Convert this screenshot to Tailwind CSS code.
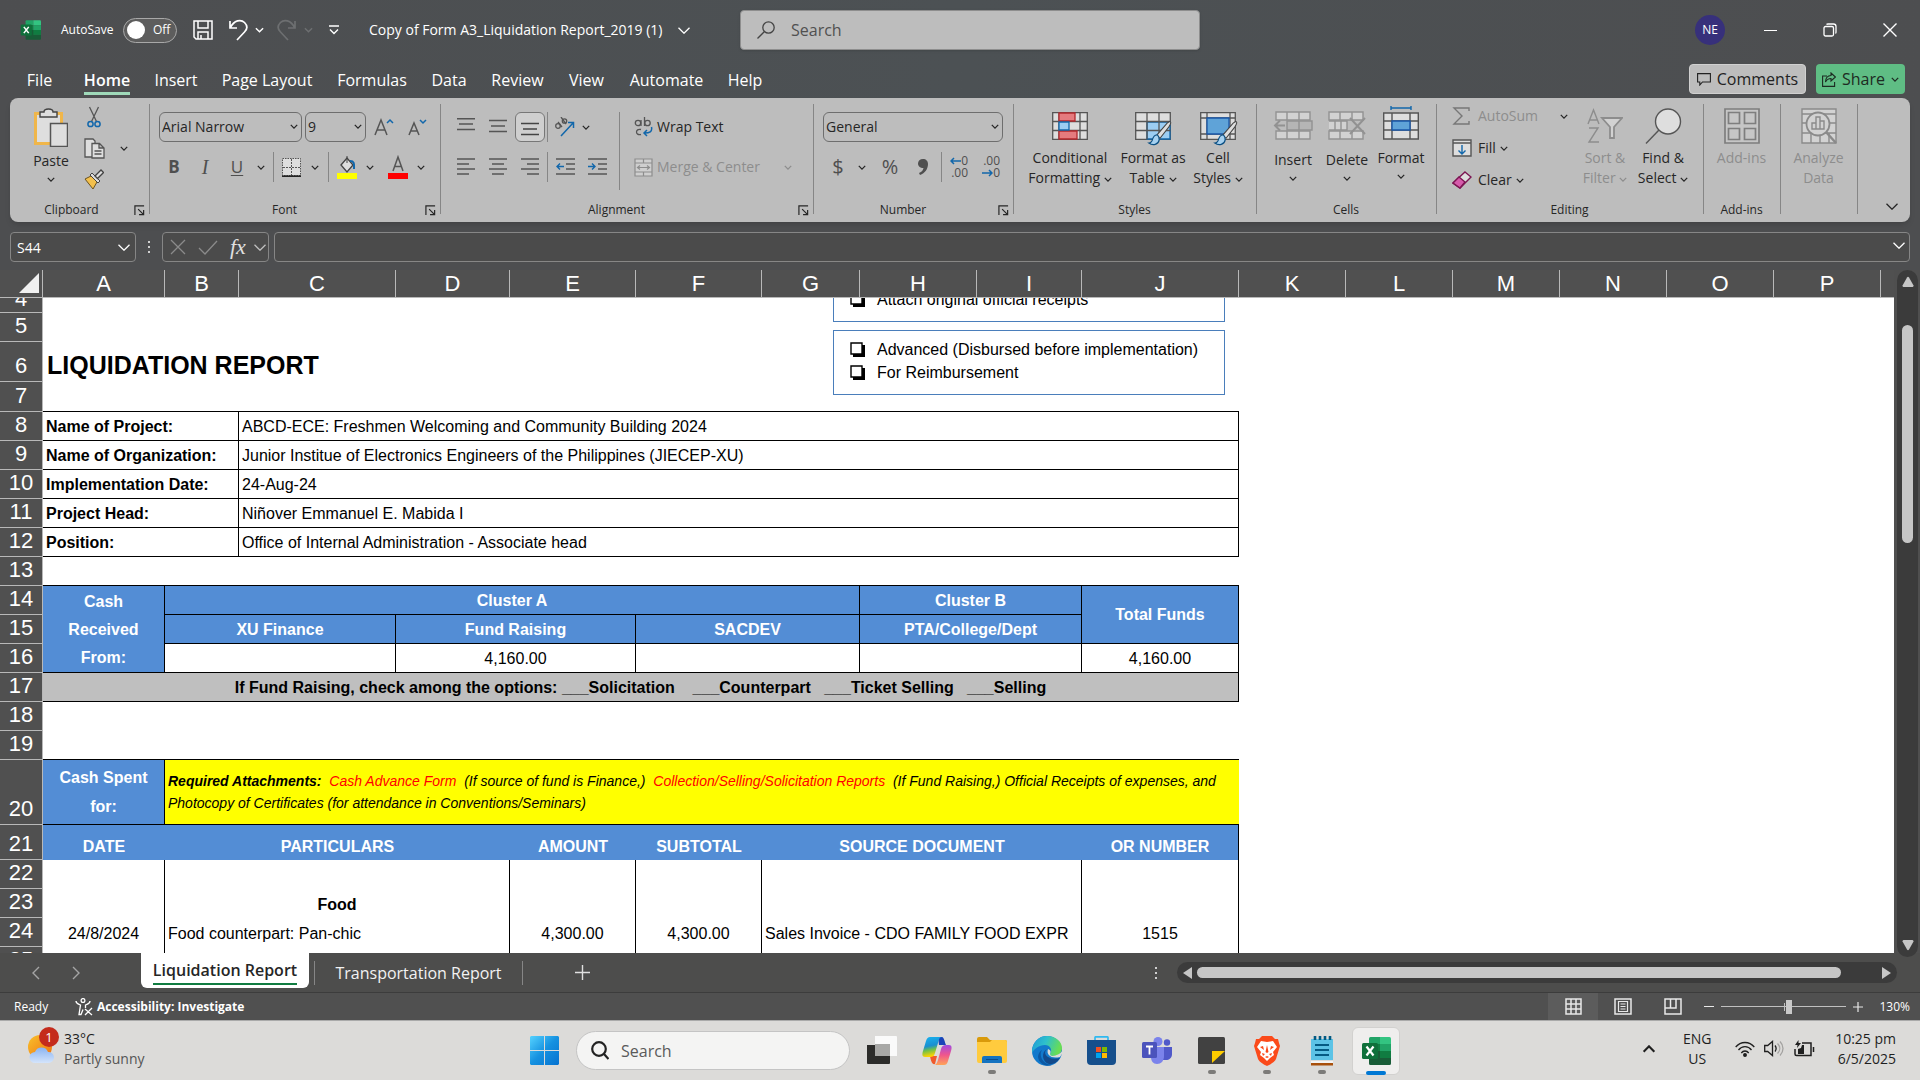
<!DOCTYPE html>
<html lang="en">
  <head>
    <meta charset="UTF-8" />
    <title>Copy of Form A3_Liquidation Report_2019 (1) - Excel</title>
    <meta name="viewport" content="width=device-width, initial-scale=1.0" />
    <script src="https://cdn.jsdelivr.net/npm/@tailwindcss/browser@4"></script>
  </head>
  <body class="h-screen flex flex-col overflow-hidden bg-[#4d4e50] text-white font-['Open_Sans',sans-serif] text-sm">
    <!-- Shared symbols -->
    <svg class="hidden">
      <symbol id="chev" viewBox="0 0 10 6"><path d="M1 1l4 4 4-4" fill="none" stroke="currentColor" stroke-width="1.6" /></symbol>
      <symbol id="chev-lg" viewBox="0 0 12 7"><path d="M.5.700l5.500 5.500 5.500-5.500" fill="none" stroke="currentColor" stroke-width="1.300" /></symbol>
      <symbol id="launcher" viewBox="0 0 12 12"><path d="M1 11V1h10M4.500 4.500L10 10M10.500 5.500v5h-5" fill="none" stroke="currentColor" stroke-width="1.300" /></symbol>
      <symbol id="xl" viewBox="0 0 30 28">
        <path d="M8 1.500A1.500 1.500 0 0 1 9.500 0H19v7H8z" fill="#21a366" />
        <path d="M19 0h9.500A1.500 1.500 0 0 1 30 1.500V7H19z" fill="#33c481" />
        <path d="M8 7h11v7H8z" fill="#107c41" /><path d="M19 7h11v7H19z" fill="#21a366" />
        <path d="M8 14h22v7H8z" fill="#107c41" /><path d="M8 14h11v7H8z" fill="#185c37" />
        <path d="M8 21h22v5.500a1.500 1.500 0 0 1-1.500 1.500h-19A1.500 1.500 0 0 1 8 26.500z" fill="#185c37" />
        <rect x="1" y="6" width="16" height="16" rx="1.500" fill="#0f703b" />
        <path d="M5.500 9.500l7 9M12.500 9.500l-7 9" stroke="#fff" stroke-width="2.200" />
      </symbol>
      <symbol id="brush" viewBox="0 0 30 34">
        <path d="M27 2c3 0 1 4-1 7L15 23l-4-4L24 4z" fill="#dedede" stroke="#444" stroke-width="1.300" />
        <path d="M12 19c-5-1-6 4-7 7-1 2-2 3-4 3 5 4 12 2 13-4 0-3 0-4-2-6z" fill="#a6d1f0" stroke="#0b4f83" stroke-width="1.500" />
      </symbol>
    </svg>

    <!-- Title bar -->
    <header class="h-[60px] shrink-0 flex items-center bg-linear-to-r from-[#4d4e50] via-[#4c5154] to-[#4d4e50]">
      <div class="w-[740px] shrink-0 flex items-center pl-5 text-xs">
        <svg class="w-[21px] h-5"><use href="#xl" /></svg>
        <span class="ml-5 w-[62px]">AutoSave</span>
        <button class="w-[54px] h-[25px] rounded-full border border-[#a8a8a8] bg-[#5d5d5d] flex items-center px-[3px] gap-2">
          <span class="size-[18px] rounded-full bg-white"></span>Off
        </button>
        <button class="ml-4" aria-label="Save">
          <svg class="size-5" viewBox="0 0 20 20" fill="none" stroke="#fff" stroke-width="1.500"><path d="M1 1h18v18H3l-2-2zM5 1v7h10V1M5 19v-7h10v7M8 15v4" /></svg>
        </button>
        <button class="ml-4" aria-label="Undo">
          <svg class="w-5 h-[22px]" viewBox="0 0 20 22" fill="none" stroke="#fff" stroke-width="1.700"><path d="M1 2v7h7M1.500 8.500C5 1 12 0 15.500 3.500c3.500 3.500 2.500 7 0 9.500L8 21" /></svg>
        </button>
        <svg class="ml-1.5 w-[9px] h-1.5"><use href="#chev" /></svg>
        <button class="ml-3 text-[#6d6f71]" aria-label="Redo">
          <svg class="w-5 h-[22px]" viewBox="0 0 20 22" fill="none" stroke="currentColor" stroke-width="1.700"><path d="M19 2v7h-7M18.500 8.500C15 1 8 0 4.500 3.500 1 7 2 10.500 4.500 13l7.500 8" /></svg>
        </button>
        <svg class="ml-2 w-[9px] h-1.5 text-[#6d6f71]"><use href="#chev" /></svg>
        <svg class="ml-4 w-[10px] h-[10px]" viewBox="0 0 10 10" fill="none" stroke="#fff" stroke-width="1.400"><path d="M0 1h10M1 4.500l4 4 4-4" /></svg>
        <h1 class="ml-[30px] w-[303px] text-sm">Copy of Form A3_Liquidation Report_2019 (1)</h1>
        <svg class="ml-1.5 w-3 h-[7px]"><use href="#chev-lg" /></svg>
      </div>
      <label class="w-[460px] h-10 flex items-center rounded bg-[#bdbdbd] border border-[#8e8e8e] shadow pl-4">
        <svg class="w-[18px] h-[18px]" viewBox="0 0 18 18" fill="none" stroke="#444" stroke-width="1.300"><circle cx="11.500" cy="6.500" r="5.700" /><path d="M7.500 10.500L.5 17.500" /></svg>
        <input type="text" placeholder="Search" class="ml-4 flex-1 text-base text-[#444] placeholder:text-[#505050] outline-none" />
      </label>
      <div class="flex-1 flex items-center justify-end">
        <span class="size-[30px] rounded-full bg-[#37307b] flex items-center justify-center text-xs mr-[15px]">NE</span>
        <button class="w-[60px] flex justify-center" aria-label="Minimize"><span class="w-[13px] h-px bg-white"></span></button>
        <button class="w-[60px] flex justify-center" aria-label="Restore"><svg class="size-3.5" viewBox="0 0 14 14" fill="none" stroke="#fff" stroke-width="1.300"><rect x="1" y="3.500" width="9.500" height="9.500" rx="1.500" /><path d="M3.500 1.500C4 1 4.500 1 5 1h5.500c1.500 0 2.500 1 2.500 2.500v5.500c0 .5 0 1-.5 1.500" /></svg></button>
        <button class="w-[60px] flex justify-center" aria-label="Close"><svg class="size-3.5" viewBox="0 0 14 14" stroke="#fff" stroke-width="1.400"><path d="M.5.5l13 13M13.500.5l-13 13" /></svg></button>
      </div>
    </header>

    <!-- Ribbon tabs -->
    <nav class="h-[38px] shrink-0 flex items-start pl-2.5 pr-[15px] text-base bg-linear-to-r from-[#4d4e50] via-[#4c5154] to-[#4d4e50]">
      <button class="w-[59px] h-10 leading-10">File</button>
      <button class="w-[76px] h-[35px] leading-10 font-semibold flex justify-center"><span class="h-[35px] border-b-[3px] border-[#9fd9b9]">Home</span></button>
      <button class="w-[62px] h-10 leading-10">Insert</button>
      <button class="w-[120px] h-10 leading-10">Page Layout</button>
      <button class="w-[90px] h-10 leading-10">Formulas</button>
      <button class="w-[64px] h-10 leading-10">Data</button>
      <button class="w-[73px] h-10 leading-10">Review</button>
      <button class="w-[65px] h-10 leading-10">View</button>
      <button class="w-[95px] h-10 leading-10">Automate</button>
      <button class="w-[62px] h-10 leading-10">Help</button>
      <button class="ml-auto mt-1 w-[117px] h-[30px] rounded bg-[#bdbdbd] border border-[#d0d0d0] text-[#222] flex items-center justify-center gap-1.5">
        <svg class="w-3.5 h-[13px]" viewBox="0 0 14 13" fill="none" stroke="#222" stroke-width="1.100"><path d="M.6.6h12.800v8.400H5.500L2.800 12V9H.6z" /></svg>Comments
      </button>
      <button class="ml-2.5 mt-1 w-[89px] h-[30px] rounded bg-[#5fbd84] text-[#1d2b22] flex items-center justify-center gap-1.5">
        <svg class="w-3.5 h-[15px]" viewBox="0 0 14 15" fill="none" stroke="currentColor" stroke-width="1.100"><path d="M5 4H.6v10.400h12V10M9 1l4.400 4L9 9V6.500C6 6.500 4.500 8 3.500 10c0-4 2-6.500 5.500-6.500z" /></svg>Share
        <svg class="w-2 h-[5px]"><use href="#chev" /></svg>
      </button>
    </nav>

    <!-- Ribbon -->
    <section class="mx-2.5 h-[124px] shrink-0 rounded-lg bg-[#bdbdbd] text-[#262626] flex shadow-md text-sm">
      <!-- Clipboard -->
      <div class="w-[139px] flex flex-col relative">
        <div class="h-[100px] flex pl-4">
          <button class="w-[50px] flex flex-col items-center pt-2.5">
            <svg class="w-[34px] h-[39px]" viewBox="0 0 34 39" fill="none"><path d="M1.500 5.500h26v30h-26z" fill="#dedede" stroke="#f0b64a" stroke-width="3" /><path d="M6 9V4h4c0-4 9-4 9 0h4v5z" fill="#dedede" stroke="#444" stroke-width="1.400" /><path d="M16.500 15.500h17v23h-17z" fill="#dedede" stroke="#555" stroke-width="1.500" /></svg>
            <span class="leading-5 mt-1">Paste</span>
            <svg class="mt-1.5 w-2 h-[5px]"><use href="#chev" /></svg>
          </button>
          <div class="w-9 flex flex-col items-center pt-2 gap-2.5">
            <button aria-label="Cut"><svg class="block w-3.5 h-[22px]" viewBox="0 0 14 22" fill="none" stroke="#555" stroke-width="1.300"><path d="M2.500 1l7 14.500M11.500 1l-7 14.500" /><g stroke="#1267ab" stroke-width="1.500"><circle cx="3.500" cy="18" r="2.600" /><circle cx="10.500" cy="18" r="2.600" /></g></svg></button>
            <button aria-label="Copy"><svg class="block w-[21px] h-[21px]" viewBox="0 0 21 21" fill="#dedede" stroke="#555" stroke-width="1.300"><path d="M8 19H1V1h8l2 2v3" /><path d="M8 5.500h7.500L20 10v10H8zM15 5.500V10h5M10.500 13h7M10.500 16h7" /></svg></button>
            <button aria-label="Format Painter"><svg class="block w-5 h-5" viewBox="0 0 20 20"><path d="M1 10l6-3 6 6-4 7z" fill="#f3c04d" stroke="#6b5320" /><path d="M6 6l2-2 8 8-2 2z" fill="#dedede" stroke="#444" /><path d="M11 7l6-6 2.500 2.500-6 6z" fill="#dedede" stroke="#444" stroke-width="1.300" /></svg></button>
          </div>
          <button class="ml-2 w-3.5" aria-label="Copy options"><svg class="w-2 h-[5px]"><use href="#chev" /></svg></button>
        </div>
        <div class="h-6 flex items-center justify-center text-xs pr-4">Clipboard</div>
        <svg class="absolute right-1 bottom-1.5 w-[11px] h-[11px]"><use href="#launcher" /></svg>
      </div>
      <!-- Font -->
      <div class="w-[291px] flex flex-col relative">
        <span class="absolute left-0 top-1.5 bottom-2 w-px bg-[#868686]"></span>
        <div class="h-[100px] pt-3.5 pl-2.5 flex flex-col gap-2.5">
          <div class="flex items-center h-[30px]">
            <div class="relative w-[143px] h-[30px]"><select aria-label="Font name" class="appearance-none w-full h-full border border-[#6e6e6e] rounded-md px-0.5"><option>Arial Narrow</option></select><svg class="absolute right-1 top-3 w-2 h-[5px]"><use href="#chev" /></svg></div>
            <div class="relative ml-[3px] w-[61px] h-[30px]"><select aria-label="Font size" class="appearance-none w-full h-full border border-[#6e6e6e] rounded-md px-0.5"><option>9</option></select><svg class="absolute right-1 top-3 w-2 h-[5px]"><use href="#chev" /></svg></div>
            <button class="ml-2 w-5" aria-label="Increase Font Size"><svg class="w-5 h-[18px]" viewBox="0 0 20 18" fill="none" stroke="#555" stroke-width="1.500"><path d="M1 17L7 2l6 15M3 12h8" /><path d="M13 5l3-3 3 3" stroke="#1267ab" /></svg></button>
            <button class="ml-3.5 w-5" aria-label="Decrease Font Size"><svg class="w-5 h-[18px]" viewBox="0 0 20 18" fill="none" stroke="#555" stroke-width="1.500"><path d="M1 17L6 5l5 12M3 13h6" /><path d="M12 2l3 3 3-3" stroke="#1267ab" /></svg></button>
          </div>
          <div class="flex items-center h-[30px] text-[17px] text-[#4f4f4f]">
            <button class="w-[30px] font-bold">B</button>
            <button class="w-8 italic font-['Liberation_Serif',serif] text-xl">I</button>
            <button class="w-8 underline underline-offset-2">U</button>
            <svg class="ml-1 mr-2 w-2 h-[5px] text-[#262626]"><use href="#chev" /></svg>
            <span class="w-px h-[30px] bg-[#868686]"></span>
            <button class="ml-2 w-[19px]" aria-label="Borders"><svg class="w-[19px] h-[19px]" viewBox="0 0 19 19" fill="none" stroke="#555"><path d="M.5.5h18v17H.5z" fill="#dedede" stroke-dasharray="1.500 1" /><path d="M9.500 1v17M1 9.500h17" stroke-dasharray="2 1" /><path d="M0 18.200h19" stroke="#222" stroke-width="1.600" /></svg></button>
            <svg class="ml-2.5 w-2 h-[5px] text-[#262626]"><use href="#chev" /></svg>
            <span class="ml-[9px] w-px h-[30px] bg-[#868686]"></span>
            <button class="ml-2 w-5" aria-label="Fill Color"><svg class="w-5 h-6" viewBox="0 0 20 24"><path d="M4 10l6-7 6 7-6 7z" fill="#dedede" stroke="#444" stroke-width="1.300" /><path d="M10 8V1" stroke="#444" /><path d="M13 6c5 0 4 4 4 8" stroke="#1267ab" stroke-width="2" fill="none" /><path d="M0 18h20v6H0z" fill="#ff0" /></svg></button>
            <svg class="ml-[9px] w-2 h-[5px] text-[#262626]"><use href="#chev" /></svg>
            <button class="ml-3.5 w-5" aria-label="Font Color"><svg class="w-5 h-6" viewBox="0 0 20 24"><path d="M5 16l5-14 5 14M6.500 11.500h7" fill="none" stroke="#555" stroke-width="1.500" /><path d="M0 18h20v6H0z" fill="#f00" /></svg></button>
            <svg class="ml-[9px] w-2 h-[5px] text-[#262626]"><use href="#chev" /></svg>
          </div>
        </div>
        <div class="h-6 flex items-center justify-center text-xs pr-5">Font</div>
        <svg class="absolute right-1 bottom-1.5 w-[11px] h-[11px]"><use href="#launcher" /></svg>
      </div>
      <!-- Alignment -->
      <div class="w-[373px] flex flex-col relative">
        <span class="absolute left-0 top-1.5 bottom-2 w-px bg-[#868686]"></span>
        <div class="h-[100px] pt-3.5 pl-2.5 flex">
          <div class="w-[169px] flex flex-col gap-2.5">
            <div class="flex items-center h-[30px]">
              <button class="w-8 flex justify-center" aria-label="Top Align"><svg class="w-[18px] h-[18px]" viewBox="0 0 18 18" stroke="#555" stroke-width="1.400"><path d="M0 .7h18M2 6h14M0 11.500h18" /></svg></button>
              <button class="w-8 flex justify-center" aria-label="Middle Align"><svg class="w-[18px] h-[18px]" viewBox="0 0 18 18" stroke="#555" stroke-width="1.400"><path d="M0 2.500h18M2 8h14M0 13.500h18" /></svg></button>
              <button class="w-[30px] h-[30px] ml-px rounded-md bg-[#cfcfcf] border border-[#777] flex items-center justify-center" aria-label="Bottom Align"><svg class="w-[18px] h-[18px]" viewBox="0 0 18 18" stroke="#444" stroke-width="1.400"><path d="M0 5.500h18M2 11h14M0 16.500h18" /></svg></button>
              <span class="ml-0.5 w-px h-[30px] bg-[#868686]"></span>
              <button class="ml-1.5 w-5" aria-label="Orientation"><svg class="w-[21px] h-[20px]" viewBox="0 0 21 20" fill="none" stroke="#555" stroke-width="1.300"><circle cx="4" cy="9" r="2.300" /><path d="M4 5l4 5M7 0l5 7" /><circle cx="10.500" cy="4" r="2.200" /><path d="M7 19L19 6M14 5.500h5.500V11" stroke="#1267ab" stroke-width="1.500" /></svg></button>
              <svg class="ml-2 w-2 h-[5px]"><use href="#chev" /></svg>
            </div>
            <div class="flex items-center h-[30px]">
              <button class="w-8 flex justify-center" aria-label="Align Left"><svg class="w-[18px] h-[18px]" viewBox="0 0 18 18" stroke="#555" stroke-width="1.400"><path d="M0 1h18M0 6h12M0 11h18M0 16h12" /></svg></button>
              <button class="w-8 flex justify-center" aria-label="Center"><svg class="w-[18px] h-[18px]" viewBox="0 0 18 18" stroke="#555" stroke-width="1.400"><path d="M0 1h18M3 6h12M0 11h18M3 16h12" /></svg></button>
              <button class="w-8 flex justify-center" aria-label="Align Right"><svg class="w-[18px] h-[18px]" viewBox="0 0 18 18" stroke="#555" stroke-width="1.400"><path d="M0 1h18M6 6h12M0 11h18M6 16h12" /></svg></button>
              <span class="ml-px w-px h-[30px] bg-[#868686]"></span>
              <button class="ml-2 w-[19px]" aria-label="Decrease Indent"><svg class="w-[19px] h-[18px]" viewBox="0 0 19 18" fill="none" stroke="#555" stroke-width="1.400"><path d="M0 1h19M10 6h9M10 11h9M0 16h19" /><path d="M8 8.500H1M4 5.500l-3 3 3 3" stroke="#1267ab" /></svg></button>
              <button class="ml-[13px] w-[19px]" aria-label="Increase Indent"><svg class="w-[19px] h-[18px]" viewBox="0 0 19 18" fill="none" stroke="#555" stroke-width="1.400"><path d="M0 1h19M10 6h9M10 11h9M0 16h19" /><path d="M0 8.500h7M4 5.500l3 3-3 3" stroke="#1267ab" /></svg></button>
            </div>
          </div>
          <span class="w-px h-[78px] bg-[#868686]"></span>
          <div class="pl-3.5 flex flex-col gap-2.5">
            <button class="flex items-center h-[30px] gap-1">
              <svg class="w-[19px] h-[20px]" viewBox="0 0 19 20" fill="none" stroke="#555" stroke-width="1.300"><circle cx="4" cy="6" r="2.700" /><path d="M7 3v6M10.500 0v9" /><circle cx="13.500" cy="6" r="2.700" /><path d="M7 12.500c-6-1.500-6 6.500 0 5" /><path d="M17.500 10c1 5-2 6-7 6M13 13l-3 3 3 3" stroke="#1267ab" stroke-width="1.500" /></svg>Wrap Text
            </button>
            <button class="flex items-center h-[30px] gap-1 text-[#8d8d8d]">
              <svg class="w-[19px] h-[19px]" viewBox="0 0 19 19" fill="#cfcfcf" stroke="#8d8d8d" stroke-width="1.200"><path d="M1 1h17v17H1zM1 5h17M1 14h17M9.500 1v4M9.500 14v4" /><path d="M3 9.500h13M6 7.500l-2.500 2 2.500 2M13 7.500l2.500 2-2.500 2" /></svg>Merge &amp; Center
              <svg class="ml-5 w-2 h-[5px]"><use href="#chev" /></svg>
            </button>
          </div>
        </div>
        <div class="h-6 flex items-center justify-center text-xs pr-5">Alignment</div>
        <svg class="absolute right-1 bottom-1.5 w-[11px] h-[11px]"><use href="#launcher" /></svg>
      </div>
      <!-- Number -->
      <div class="w-[200px] flex flex-col relative">
        <span class="absolute left-0 top-1.5 bottom-2 w-px bg-[#868686]"></span>
        <div class="h-[100px] pt-3.5 px-2.5 flex flex-col gap-2.5">
          <div class="relative h-[30px]"><select aria-label="Number format" class="appearance-none w-full h-full border border-[#6e6e6e] rounded-md px-0.5"><option>General</option></select><svg class="absolute right-1 top-3 w-2 h-[5px]"><use href="#chev" /></svg></div>
          <div class="flex items-center h-[30px] text-[#4f4f4f] text-xl">
            <button class="w-[30px]">$</button>
            <svg class="ml-[5px] mr-[3px] w-2 h-[5px] text-[#262626]"><use href="#chev" /></svg>
            <button class="w-[42px]">%</button>
            <button class="w-6 flex justify-center" aria-label="Comma Style"><svg class="w-2.5 h-4" viewBox="0 0 10 16"><path d="M5 0c3 0 5 2 5 5 0 5-3 9-8 11l-1-2c3-1 4-3 4.500-5C2 9 0 7 0 4.500 0 2 2 0 5 0z" fill="#4f4f4f" /></svg></button>
            <span class="ml-1.5 w-px h-[30px] bg-[#868686]"></span>
            <button class="ml-1.5 w-5 text-xs leading-3 flex flex-col items-end" aria-label="Increase Decimal"><span class="flex items-center h-3"><svg class="w-[11px] h-2" viewBox="0 0 11 8" fill="none" stroke="#1267ab" stroke-width="1.500"><path d="M11 4H1M4 1L1 4l3 3" /></svg>0</span><span class="h-3">.00</span></button>
            <button class="ml-3 w-5 text-xs leading-3 flex flex-col items-end" aria-label="Decrease Decimal"><span class="h-3">.00</span><span class="flex items-center h-3"><svg class="w-[11px] h-2" viewBox="0 0 11 8" fill="none" stroke="#1267ab" stroke-width="1.500"><path d="M0 4h10M7 1l3 3-3 3" /></svg>0</span></button>
          </div>
        </div>
        <div class="h-6 flex items-center justify-center text-xs pr-5">Number</div>
        <svg class="absolute right-1 bottom-1.5 w-[11px] h-[11px]"><use href="#launcher" /></svg>
      </div>
      <!-- Styles -->
      <div class="w-[243px] flex flex-col relative">
        <span class="absolute left-0 top-1.5 bottom-2 w-px bg-[#868686]"></span>
        <div class="h-[100px] pt-3.5 pl-3 flex leading-5">
          <button class="w-[90px] flex flex-col items-center gap-2">
            <svg class="w-9 h-7" viewBox="0 0 36 28" fill="#dedede" stroke="#555" stroke-width="1.300"><path d="M.7.7h34.600v26.600H.7zM.7 9.500h34.600M.7 18.500h34.600M7 .7v26.600M28 .7v26.600" /><path d="M7 1h16v8H7zM7 19h18v8H7z" fill="#e57b7e" stroke="#b3282d" /><path d="M7 10h10v8H7z" fill="#9ccdf2" stroke="#1267ab" /></svg>
            <span>Conditional<br />Formatting <svg class="inline w-2 h-[5px] align-middle"><use href="#chev" /></svg></span>
          </button>
          <button class="w-[76px] flex flex-col items-center gap-2 relative">
            <svg class="w-9 h-7" viewBox="0 0 36 28" fill="#dedede" stroke="#555" stroke-width="1.300"><path d="M.7.7h34.600v26.600H.7z" /><path d="M12 10h23v17H12z" fill="#9ccdf2" stroke="#1267ab" /><path d="M.7 9.500h34.600M.7 18.500h34.600M12 .7v26.600M24 .7v26.600" /></svg>
            <svg class="absolute left-[30px] top-2 w-[30px] h-[27px]"><use href="#brush" /></svg>
            <span class="whitespace-nowrap">Format as<br />Table <svg class="inline w-2 h-[5px] align-middle"><use href="#chev" /></svg></span>
          </button>
          <button class="w-[54px] flex flex-col items-center gap-2 relative">
            <svg class="w-9 h-7" viewBox="0 0 36 28" fill="#dedede" stroke="#555" stroke-width="1.300"><path d="M.7.7h34.600v26.600H.7zM.7 6h34.600M.7 22h34.600M7 .7v26.600M30 .7v26.600" /><path d="M7 6h22v16H7z" fill="#5fa3d8" stroke="#1a57a8" /></svg>
            <svg class="absolute left-5 top-2 w-[30px] h-[27px]"><use href="#brush" /></svg>
            <span>Cell<br />Styles <svg class="inline w-2 h-[5px] align-middle"><use href="#chev" /></svg></span>
          </button>
        </div>
        <div class="h-6 flex items-center justify-center text-xs">Styles</div>
      </div>
      <!-- Cells -->
      <div class="w-[180px] flex flex-col relative">
        <span class="absolute left-0 top-1.5 bottom-2 w-px bg-[#868686]"></span>
        <div class="h-[100px] pt-2 pl-2.5 flex leading-5">
          <button class="w-[54px] flex flex-col items-center">
            <svg class="mt-1 w-10 h-[30px]" viewBox="0 0 40 30" fill="#d2d2d2" stroke="#929292" stroke-width="1.400"><path d="M3 2h34v8H3zM14 2v8M26 2v8M3 21h34v8H3zM14 21v8M26 21v8" /><path d="M14 11h25v9H14zM26 11v9" fill="#b5b5b5" /><path d="M12 15.500H2M7 10.500l-5 5 5 5" fill="none" stroke-width="2" /></svg>
            <span class="mt-2.5">Insert</span><svg class="mt-1.5 w-2 h-[5px]"><use href="#chev" /></svg>
          </button>
          <button class="w-[54px] flex flex-col items-center">
            <svg class="mt-1 w-[38px] h-[30px]" viewBox="0 0 38 30" fill="#d2d2d2" stroke="#929292" stroke-width="1.400"><path d="M1 2h34v8H1zM12 2v8M24 2v8M1 21h34v8H1zM12 21v8M24 21v8" /><path d="M1 11h18v9H1M7 11v9M13 11v9" /><path d="M22 8l15 16M37 8L22 24" fill="none" stroke-width="2" /></svg>
            <span class="mt-2.5">Delete</span><svg class="mt-1.5 w-2 h-[5px]"><use href="#chev" /></svg>
          </button>
          <button class="w-[54px] flex flex-col items-center">
            <svg class="w-9 h-[34px]" viewBox="0 0 36 34" fill="#dedede" stroke="#555" stroke-width="1.400"><path d="M8 2h20M8 0v4M28 0v4" stroke="#1267ab" /><path d="M.7 7h34.600v26H.7zM.7 15h34.600M.7 24h34.600M9 7v26M27 7v26" /><path d="M9 15h18v9H9z" fill="#5fa3d8" stroke="#1a57a8" /></svg>
            <span class="mt-2">Format</span><svg class="mt-1.5 w-2 h-[5px]"><use href="#chev" /></svg>
          </button>
        </div>
        <div class="h-6 flex items-center justify-center text-xs">Cells</div>
      </div>
      <!-- Editing -->
      <div class="w-[267px] flex flex-col relative">
        <span class="absolute left-0 top-1.5 bottom-2 w-px bg-[#868686]"></span>
        <div class="h-[100px] flex leading-5">
          <div class="w-[140px] pl-4 pt-0.5 flex flex-col">
            <button class="h-8 flex items-center text-[#8d8d8d]"><svg class="w-5 h-[18px] mr-1.5" viewBox="0 0 20 18" fill="none" stroke="#777" stroke-width="1.400"><path d="M17 4V1H2l8 8-8 8h15v-3" /></svg>AutoSum<svg class="ml-auto mr-2 w-2 h-[5px] text-[#262626]"><use href="#chev" /></svg></button>
            <button class="h-8 flex items-center"><svg class="w-5 h-[18px] mr-1.5" viewBox="0 0 20 18" fill="#dedede" stroke="#555" stroke-width="1.400"><path d="M1 1h18v16H1zM1 4h18" /><path d="M10 6v9M6.500 11.500L10 15l3.500-3.500" fill="none" stroke="#1267ab" /></svg>Fill<svg class="ml-1 w-2 h-[5px]"><use href="#chev" /></svg></button>
            <button class="h-8 flex items-center"><svg class="w-5 h-[18px] mr-1.5" viewBox="0 0 20 18" fill="#dedede" stroke="#7c1552" stroke-width="1.400"><path d="M13 1l6 5-11 11-7-5z" /><path d="M7 6l6 5-5 6-7-5z" fill="#d65bab" /></svg>Clear<svg class="ml-1 w-2 h-[5px]"><use href="#chev" /></svg></button>
          </div>
          <button class="w-[58px] pt-2.5 flex flex-col items-center text-[#8d8d8d]">
            <svg class="w-9 h-[36px]" viewBox="0 0 36 36" fill="none" stroke="#8d8d8d" stroke-width="1.400"><path d="M1 16L6.500 2 12 16M3 12h7M2 20h9L2 34h10" /><path d="M15 10h20l-8 9v11h-4V19z" fill="#d2d2d2" stroke-width="1.800" /></svg>
            <span class="mt-1 whitespace-nowrap">Sort &amp;<br />Filter <svg class="inline w-2 h-[5px] align-middle"><use href="#chev" /></svg></span>
          </button>
          <button class="w-[58px] pt-2.5 flex flex-col items-center">
            <svg class="w-[37px] h-[36px]" viewBox="0 0 37 36" fill="#dedede" stroke="#555" stroke-width="1.400"><circle cx="23" cy="13.500" r="12.500" /><path d="M14 22L1 35.500" /></svg>
            <span class="mt-1 whitespace-nowrap">Find &amp;<br />Select <svg class="inline w-2 h-[5px] align-middle"><use href="#chev" /></svg></span>
          </button>
        </div>
        <div class="h-6 flex items-center justify-center text-xs">Editing</div>
      </div>
      <!-- Add-ins -->
      <div class="w-[77px] flex flex-col relative">
        <span class="absolute left-0 top-1.5 bottom-2 w-px bg-[#868686]"></span>
        <button class="h-[100px] pt-2.5 flex flex-col items-center leading-5 text-[#8d8d8d]">
          <svg class="w-9 h-9" viewBox="0 0 36 36" fill="#c6c6c6" stroke="#7e7e7e" stroke-width="1.700"><path d="M1 1h34v34H1z" /><path d="M4.500 4.500h11v11h-11zM20.500 4.500h11v11h-11zM4.500 20.500h11v11h-11zM20.500 20.500h11v11h-11z" /></svg>
          <span class="mt-1">Add-ins</span>
        </button>
        <div class="h-6 flex items-center justify-center text-xs">Add-ins</div>
      </div>
      <div class="w-[77px] flex flex-col relative">
        <span class="absolute left-0 top-1.5 bottom-2 w-px bg-[#868686]"></span>
        <button class="h-[100px] pt-2.5 flex flex-col items-center leading-5 text-[#8d8d8d]">
          <svg class="w-9 h-9" viewBox="0 0 36 36" fill="#d2d2d2" stroke="#8a8a8a" stroke-width="1.400"><path d="M1 1h34v34H1zM1 6h34M1 15h34M1 25h34M10 25v10M19 25v10M28 25v10" /><circle cx="17" cy="16" r="11.500" stroke-width="1.800" /><path d="M25 24l10 11" stroke-width="2.500" /><path d="M11 15h4v6h-4zM15 9h4v12h-4zM19 13h4v8h-4z" /></svg>
          <span class="mt-1">Analyze<br />Data</span>
        </button>
      </div>
      <div class="flex-1 flex items-end justify-end relative pr-3 pb-3">
        <span class="absolute left-0 top-1.5 bottom-2 w-px bg-[#868686]"></span>
        <button aria-label="Ribbon Display Options"><svg class="w-3 h-[7px]"><use href="#chev-lg" /></svg></button>
      </div>
    </section>

    <!-- Formula bar -->
    <section class="h-12 shrink-0 flex pt-2.5 px-2.5">
      <div class="relative w-[126px] h-[30px]">
        <input type="text" aria-label="Name Box" value="S44" class="w-full h-full bg-[#4b4b4b] border border-[#868686] rounded px-1.5 text-sm" />
        <svg class="absolute right-1.5 top-3 w-3 h-[7px]"><use href="#chev-lg" /></svg>
      </div>
      <svg class="mx-3 w-0.5 h-[30px]" viewBox="0 0 2 30" fill="#d0d0d0"><path d="M0 9h2v2H0zM0 14h2v2H0zM0 19h2v2H0z" /></svg>
      <div class="w-[107px] h-[30px] flex items-center border border-[#868686] rounded bg-[#4b4b4b] pl-[7px] pr-0.5">
        <svg class="size-4" viewBox="0 0 16 16" stroke="#8b8b8b" stroke-width="1.300"><path d="M1 1l14 14M15 1L1 15" /></svg>
        <svg class="ml-3 w-5 h-[15px]" viewBox="0 0 20 15" fill="none" stroke="#8b8b8b" stroke-width="1.300"><path d="M1 8l6 6L19 1" /></svg>
        <button class="ml-3 italic font-['Liberation_Serif',serif] text-[22px] leading-6 text-[#e0e0e0]">fx</button>
        <svg class="ml-auto w-3 h-[7px] shrink-0 text-[#c0c0c0]"><use href="#chev-lg" /></svg>
      </div>
      <div class="relative ml-[5px] flex-1 h-[30px]">
        <input type="text" aria-label="Formula Bar" class="w-full h-full bg-[#4b4b4b] border border-[#868686] rounded px-2" />
        <svg class="absolute right-[5px] top-2.5 w-3 h-[7px]"><use href="#chev-lg" /></svg>
      </div>
    </section>

    <!-- Worksheet -->
    <main class="flex-1 min-h-0 flex">
      <div class="relative flex-1 overflow-hidden bg-white">
        <table class="table-fixed w-full border-separate border-spacing-0 text-black font-['Liberation_Sans',sans-serif] text-base leading-[26px]
          [&_td]:align-bottom [&_th]:align-bottom [&_th]:pb-0.5 [&_th]:font-normal [&_th]:text-white [&_th]:bg-[#505050] [&_th]:text-[22px] [&_th]:border-[#b8b8b8] [&_th]:border-b [&_th]:border-r [&_td]:border-black [&_td]:whitespace-nowrap [&_td]:overflow-hidden">
          <colgroup>
            <col class="w-[43px]" /><col class="w-[122px]" /><col class="w-[74px]" /><col class="w-[157px]" /><col class="w-[114px]" /><col class="w-[126px]" /><col class="w-[126px]" /><col class="w-[98px]" /><col class="w-[117px]" /><col class="w-[105px]" /><col class="w-[157px]" /><col class="w-[107px]" /><col class="w-[107px]" /><col class="w-[107px]" /><col class="w-[107px]" /><col class="w-[107px]" /><col class="w-[107px]" /><col />
          </colgroup>
          <thead>
            <tr class="h-7 leading-[23px]">
              <th><svg class="ml-auto mr-[3px] mb-0.5 w-5 h-5" viewBox="0 0 20 20"><path d="M20 0v20H0z" fill="#f0f0f0" /></svg></th>
              <th scope="col">A</th><th scope="col">B</th><th scope="col">C</th><th scope="col">D</th><th scope="col">E</th><th scope="col">F</th><th scope="col">G</th><th scope="col">H</th><th scope="col">I</th><th scope="col">J</th><th scope="col">K</th><th scope="col">L</th><th scope="col">M</th><th scope="col">N</th><th scope="col">O</th><th scope="col">P</th><th class="border-r-0!"></th>
            </tr>
          </thead>
          <tbody>
            <tr><th scope="row" class="pb-0!"><div class="h-3.5 flex items-end justify-center overflow-hidden">4</div></th></tr>
            <tr class="h-[29px]"><th scope="row">5</th></tr>
            <tr class="h-10"><th scope="row">6</th><td colspan="10" class="pl-1 pb-1 text-[25px] font-bold">LIQUIDATION REPORT</td></tr>
            <tr class="h-[30px]"><th scope="row">7</th><td colspan="10" class="border-b"></td></tr>
            <tr class="h-[29px]"><th scope="row">8</th><td colspan="2" class="border-b border-r pl-[3px] font-bold">Name of Project:</td><td colspan="8" class="border-b border-r pl-[3px]">ABCD-ECE: Freshmen Welcoming and Community Building 2024</td></tr>
            <tr class="h-[29px]"><th scope="row">9</th><td colspan="2" class="border-b border-r pl-[3px] font-bold">Name of Organization:</td><td colspan="8" class="border-b border-r pl-[3px]">Junior Institue of Electronics Engineers of the Philippines (JIECEP-XU)</td></tr>
            <tr class="h-[29px]"><th scope="row">10</th><td colspan="2" class="border-b border-r pl-[3px] font-bold">Implementation Date:</td><td colspan="8" class="border-b border-r pl-[3px]">24-Aug-24</td></tr>
            <tr class="h-[29px]"><th scope="row">11</th><td colspan="2" class="border-b border-r pl-[3px] font-bold">Project Head:</td><td colspan="8" class="border-b border-r pl-[3px]">Niñover Emmanuel E. Mabida I</td></tr>
            <tr class="h-[29px]"><th scope="row">12</th><td colspan="2" class="border-b border-r pl-[3px] font-bold">Position:</td><td colspan="8" class="border-b border-r pl-[3px]">Office of Internal Administration - Associate head</td></tr>
            <tr class="h-[29px]"><th scope="row">13</th><td colspan="10" class="border-b"></td></tr>
            <tr class="h-[29px] text-center font-bold text-white">
              <th scope="row">14</th>
              <td rowspan="3" class="border-b border-r bg-[#538dd5] leading-[28px]">Cash<br />Received<br />From:</td>
              <td colspan="6" class="border-b border-r bg-[#538dd5]">Cluster A</td>
              <td colspan="2" class="border-b border-r bg-[#538dd5]">Cluster B</td>
              <td rowspan="2" class="border-b border-r bg-[#538dd5] align-middle!">Total Funds</td>
            </tr>
            <tr class="h-[29px] text-center font-bold text-white">
              <th scope="row">15</th>
              <td colspan="2" class="border-b border-r bg-[#538dd5]">XU Finance</td>
              <td colspan="2" class="border-b border-r bg-[#538dd5]">Fund Raising</td>
              <td colspan="2" class="border-b border-r bg-[#538dd5]">SACDEV</td>
              <td colspan="2" class="border-b border-r bg-[#538dd5]">PTA/College/Dept</td>
            </tr>
            <tr class="h-[29px] text-center">
              <th scope="row">16</th>
              <td colspan="2" class="border-b border-r"></td>
              <td colspan="2" class="border-b border-r">4,160.00</td>
              <td colspan="2" class="border-b border-r"></td>
              <td colspan="2" class="border-b border-r"></td>
              <td class="border-b border-r">4,160.00</td>
            </tr>
            <tr class="h-[29px] text-center font-bold"><th scope="row">17</th><td colspan="10" class="border-b border-r bg-[#bfbfbf] whitespace-pre!">If Fund Raising, check among the options: ___Solicitation    ___Counterpart   ___Ticket Selling   ___Selling</td></tr>
            <tr class="h-[29px]"><th scope="row">18</th></tr>
            <tr class="h-[29px]"><th scope="row">19</th><td colspan="10" class="border-b"></td></tr>
            <tr class="h-[65px]">
              <th scope="row">20</th>
              <td class="border-b border-r bg-[#538dd5] text-center font-bold text-white leading-[29px] align-top! pt-[3px]">Cash Spent<br />for:</td>
              <td colspan="9" class="border-b bg-[#ffff00] italic text-sm leading-[22px] align-middle! pl-[3px]"><b>Required Attachments:</b>&nbsp; <span class="text-[#ff0000]">Cash Advance Form</span>&nbsp; (If source of fund is Finance,)&nbsp; <span class="text-[#ff0000]">Collection/Selling/Solicitation Reports</span>&nbsp; (If Fund Raising,) Official Receipts of expenses, and<br />Photocopy of Certificates (for attendance in Conventions/Seminars)</td>
            </tr>
            <tr class="h-[35px] text-center font-bold text-white [&_td]:bg-[#538dd5]">
              <th scope="row">21</th><td>DATE</td><td colspan="3">PARTICULARS</td><td>AMOUNT</td><td>SUBTOTAL</td><td colspan="3">SOURCE DOCUMENT</td><td class="border-r">OR NUMBER</td>
            </tr>
            <tr class="h-[29px] [&_td]:border-r"><th scope="row">22</th><td></td><td colspan="3"></td><td></td><td></td><td colspan="3"></td><td></td></tr>
            <tr class="h-[29px] [&_td]:border-r"><th scope="row">23</th><td></td><td colspan="3" class="text-center font-bold">Food</td><td></td><td></td><td colspan="3"></td><td></td></tr>
            <tr class="h-[29px] text-center [&_td]:border-r"><th scope="row">24</th><td>24/8/2024</td><td colspan="3" class="text-left pl-[3px]">Food counterpart: Pan-chic</td><td>4,300.00</td><td>4,300.00</td><td colspan="3" class="text-left pl-[3px]">Sales Invoice - CDO FAMILY FOOD EXPR</td><td>1515</td></tr>
            <tr class="h-[29px] [&_td]:border-r"><th scope="row">25</th><td></td><td colspan="3"></td><td></td><td></td><td colspan="3"></td><td></td></tr>
          </tbody>
        </table>

        <!-- Text boxes floating over the cells -->
        <div class="absolute left-[833px] top-7 w-[392px] text-black font-['Liberation_Sans',sans-serif] text-base leading-[23px]">
          <div class="h-6 border border-t-0 border-[#4a7ebb] flex items-end overflow-hidden pb-2.5 pl-4">
            <p class="flex items-center gap-3"><svg class="size-[15px]" viewBox="0 0 15 15"><path d="M3 3h12v12H3z" /><path d="M1 1h11v11H1z" fill="#fff" stroke="#000" stroke-width="1.400" /></svg>Attach original official receipts</p>
          </div>
          <div class="mt-2 h-[65px] border border-[#4a7ebb] bg-white pt-[7px] pl-4">
            <p class="flex items-center gap-3"><svg class="size-[15px]" viewBox="0 0 15 15"><path d="M3 3h12v12H3z" /><path d="M1 1h11v11H1z" fill="#fff" stroke="#000" stroke-width="1.400" /></svg>Advanced (Disbursed before implementation)</p>
            <p class="flex items-center gap-3"><svg class="size-[15px]" viewBox="0 0 15 15"><path d="M3 3h12v12H3z" /><path d="M1 1h11v11H1z" fill="#fff" stroke="#000" stroke-width="1.400" /></svg>For Reimbursement</p>
          </div>
        </div>
      </div>
      <div class="w-[26px] pl-[3px] pr-0.5 bg-[#4f4f4f]">
        <div class="h-[687px] relative z-10 rounded-full bg-[#3b3b3b] flex flex-col items-center py-1.5">
          <svg class="w-3 h-[11px]" viewBox="0 0 12 11"><path d="M5 1.500q1-1.500 2 0l4.500 8q0 1.500-1 1.500h-9q-1 0-1-1.500z" fill="#c6c6c6" /></svg>
          <div class="mt-[38px] w-[11px] h-[218px] rounded-full bg-[#c6c6c6]"></div>
          <svg class="mt-auto w-3 h-[11px] rotate-180" viewBox="0 0 12 11"><path d="M5 1.500q1-1.500 2 0l4.500 8q0 1.500-1 1.500h-9q-1 0-1-1.500z" fill="#c6c6c6" /></svg>
        </div>
      </div>
    </main>

    <!-- Sheet tabs -->
    <section class="h-10 shrink-0 flex bg-[#4d4d4c] border-b border-[#3c3c3c] text-base">
      <div class="w-[141px] shrink-0 flex items-center pl-8 gap-8 text-[#a5a5a5]">
        <svg class="w-2 h-3.5" viewBox="0 0 8 14" fill="none" stroke="currentColor" stroke-width="1.400"><path d="M7 1L1 7l6 6" /></svg>
        <svg class="w-2 h-3.5" viewBox="0 0 8 14" fill="none" stroke="currentColor" stroke-width="1.400"><path d="M1 1l6 6-6 6" /></svg>
      </div>
      <button class="w-[168px] h-[35px] bg-white rounded-b-md text-[#262626] font-semibold flex justify-center"><span class="h-8 leading-[34px] border-b-2 border-[#107c41]">Liquidation Report</span></button>
      <span class="ml-[5px] mt-2 w-px h-6 bg-[#868686]"></span>
      <button class="w-[207px] h-10 text-[#f2f2f2]">Transportation Report</button>
      <span class="mt-2 w-px h-6 bg-[#868686]"></span>
      <button class="ml-[52px]" aria-label="New sheet"><svg class="size-[15px]" viewBox="0 0 15 15" stroke="#e0e0e0" stroke-width="1.400"><path d="M7.500 0v15M0 7.500h15" /></svg></button>
      <div class="ml-auto flex items-center pr-[23px]">
        <svg class="mr-5 w-0.5 h-3" viewBox="0 0 2 12" fill="#d0d0d0"><path d="M0 0h2v2H0zM0 5h2v2H0zM0 10h2v2H0z" /></svg>
        <div class="w-[720px] h-[21px] rounded-full bg-[#3b3b3b] flex items-center px-1.5">
          <svg class="w-[9px] h-3" viewBox="0 0 9 12"><path d="M9 0v12L0 6z" fill="#c6c6c6" /></svg>
          <div class="ml-[5px] w-[644px] h-[11px] rounded-full bg-[#c6c6c6]"></div>
          <svg class="ml-auto w-[9px] h-3" viewBox="0 0 9 12"><path d="M0 0v12l9-6z" fill="#c6c6c6" /></svg>
        </div>
      </div>
    </section>

    <!-- Status bar -->
    <section class="h-[27px] shrink-0 flex items-center bg-[#505050] text-xs">
      <span class="pl-3.5 w-[75px]">Ready</span>
      <button class="flex items-center gap-1 font-bold">
        <svg class="w-[18px] h-[18px]" viewBox="0 0 18 18" fill="none" stroke="#fff" stroke-width="1.300"><circle cx="8" cy="2.500" r="1.900" /><path d="M1 3c0 3 3 3 4.500 4L4 16.500h2l2-5M15 3c0 3-3 3-4.500 4v3M10 11l7 6M17 10l-7 7" /></svg>Accessibility: Investigate
      </button>
      <div class="ml-auto flex items-center h-full">
        <button class="w-[50px] h-full bg-[#5c5c5c] flex items-center justify-center" aria-label="Normal"><svg class="w-[17px] h-[17px]" viewBox="0 0 17 17" fill="none" stroke="#e8e8e8" stroke-width="1.500"><path d="M1 1h15v15H1zM1 6h15M1 11h15M6 1v15M11 1v15" /></svg></button>
        <button class="w-[50px] h-full flex items-center justify-center" aria-label="Page Layout"><svg class="w-[18px] h-[17px]" viewBox="0 0 18 17" fill="none" stroke="#e8e8e8" stroke-width="1.500"><path d="M1 1h16v15H1z" /><path d="M4.500 3.500h9v10h-9zM6.500 6h5M6.500 8.500h5M6.500 11h5" stroke-width="1.200" /></svg></button>
        <button class="w-[50px] h-full flex items-center justify-center" aria-label="Page Break Preview"><svg class="w-[18px] h-[17px]" viewBox="0 0 18 17" fill="none" stroke="#e8e8e8" stroke-width="1.500"><path d="M1 1h16v15H1zM1 10h11V1M6.500 1v9" /></svg></button>
        <button class="ml-1.5 w-2.5 h-px bg-[#e8e8e8]" aria-label="Zoom Out"></button>
        <div class="relative mx-[7px] w-[125px] h-4 flex items-center">
          <input type="range" aria-label="Zoom" min="0" max="100" value="55" class="appearance-none w-full h-px bg-[#c0c0c0] [&::-webkit-slider-thumb]:appearance-none [&::-webkit-slider-thumb]:w-1.5 [&::-webkit-slider-thumb]:h-3.5 [&::-webkit-slider-thumb]:bg-[#c9c9c9]" />
          <span class="absolute left-1/2 top-1 w-px h-2 bg-[#c0c0c0]"></span>
        </div>
        <button aria-label="Zoom In"><svg class="w-2.5 h-2.5" viewBox="0 0 10 10" stroke="#e8e8e8" stroke-width="1.200"><path d="M5 0v10M0 5h10" /></svg></button>
        <span class="w-[57px] pr-2.5 text-right">130%</span>
      </div>
    </section>

    <!-- Taskbar -->
    <footer class="h-[60px] shrink-0 grid grid-cols-[1fr_auto_1fr] items-center bg-[#dcdbd9] border-t border-[#aaa] text-[#1f1f1f]">
      <button class="flex items-center pl-7 text-left">
        <span class="relative w-9 h-9">
          <svg class="w-[27px] h-[30px] mt-0.5" viewBox="0 0 27 30"><defs><linearGradient id="sun" x2="1" y2="1"><stop stop-color="#f8c12c" /><stop offset="1" stop-color="#f0700f" /></linearGradient><linearGradient id="cloud" x2="0" y2="1"><stop stop-color="#8ab4f2" /><stop offset="1" stop-color="#d4e4fb" /></linearGradient></defs><circle cx="12" cy="12" r="12" fill="url(#sun)" /><path d="M7 28a5 5 0 0 1 0-11 7 7 0 0 1 13 0 5.500 5.500 0 0 1 1 11z" fill="url(#cloud)" /></svg>
          <span class="absolute -top-1.5 left-[11px] size-5 rounded-full bg-[#c42b1c] text-white text-[13px] leading-5 text-center">1</span>
        </span>
        <span class="pb-1 text-sm leading-5">33°C<br /><span class="text-[#555]">Partly sunny</span></span>
      </button>
      <nav class="flex items-center h-full">
        <button class="w-[55px] flex justify-center" aria-label="Start"><svg class="w-[29px] h-[29px]" viewBox="0 0 29 29"><defs><linearGradient id="win" x2="1" y2="1"><stop stop-color="#55d2ff" /><stop offset=".5" stop-color="#1591e0" /><stop offset="1" stop-color="#0672d0" /></linearGradient></defs><path d="M1 0h13v14H0V1zM15 0h13l1 1v13H15zM0 15h14v14H1l-1-1zM15 15h14v13l-1 1H15z" fill="url(#win)" /></svg></button>
        <label class="mx-1 w-[274px] h-[39px] rounded-full bg-[#f4f4f3] border border-[#c4c4c4] flex items-center pl-3.5">
          <svg class="w-[18px] h-[19px]" viewBox="0 0 18 19" fill="none" stroke="#222" stroke-width="2.200"><circle cx="8" cy="8" r="6.800" /><path d="M13 13l4.500 5" /></svg>
          <input type="text" placeholder="Search" class="ml-3 w-40 text-base placeholder:text-[#5a5a5a] outline-none" />
        </label>
        <button class="w-[55px] flex justify-center" aria-label="Task View"><svg class="w-[30px] h-[29px]" viewBox="0 0 30 29"><path d="M0 9h23v18q0 1-1 1H1q-1 0-1-1z" fill="#2c2c2a" /><path d="M8 0h21q1 0 1 1v19H8z" fill="#fff" opacity=".85" /><path d="M8 8h15v12H8z" fill="#a8a8a6" /></svg></button>
        <button class="w-[55px] flex justify-center" aria-label="Copilot"><svg class="w-[30px] h-[28px]" viewBox="0 0 30 28"><defs><linearGradient id="cp1" x2=".2" y2="1"><stop stop-color="#19b3f0" /><stop offset=".5" stop-color="#1a8fd0" /><stop offset=".7" stop-color="#6fc04a" /><stop offset="1" stop-color="#ffd400" /></linearGradient><linearGradient id="cp2" x2="0" y2="1"><stop stop-color="#a24be0" /><stop offset=".5" stop-color="#f0568c" /><stop offset="1" stop-color="#ffa457" /></linearGradient></defs><path d="M16 0h4c2 0 3 6 4 8h-7z" fill="#1b44b8" /><path d="M8 19h7l-2 8c-3 1-4-3-5-8z" fill="#f05a2c" /><path d="M8 0h12c-3 0-3 3-4 6l-3 10c-1 3-2 4-5 4H3c-3 0-3-3-2-6L4 4c1-3 2-4 4-4z" fill="url(#cp1)" /><path d="M22 28H12c2 0 3-2 4-5l3-11c1-3 2-4 5-4h3c3 0 3 3 2 6l-3 10c-1 3-2 4-4 4z" fill="url(#cp2)" /></svg></button>
        <button class="relative w-[55px] h-full flex items-center justify-center" aria-label="File Explorer"><svg class="w-[30px] h-[27px]" viewBox="0 0 30 27"><path d="M0 2q0-2 2-2h8l3 3h15q2 0 2 2v4H0z" fill="#d99a0b" /><path d="M0 5h13l2-2h13q2 0 2 2v19q0 2-2 2H2q-2 0-2-2z" fill="#ffcb3e" /><path d="M5 26v-5q0-2 2-2h16q2 0 2 2v5z" fill="#1573c0" /><path d="M9 22.500h12" stroke="#0b4c8c" /></svg><span class="absolute bottom-1.5 w-2 h-1 rounded-full bg-[#7c7b79]"></span></button>
        <button class="w-[55px] flex justify-center" aria-label="Edge"><svg class="w-[30px] h-[30px]" viewBox="0 0 30 30"><defs><linearGradient id="ed1" x2="1" y2=".3"><stop stop-color="#1d98d8" /><stop offset=".5" stop-color="#2ec0cc" /><stop offset="1" stop-color="#68dd55" /></linearGradient></defs><circle cx="15" cy="15" r="15" fill="#1279cc" /><path d="M1 10C4 3 9 0 15 0c9 0 15 6 15 12 0 5-4 8-9 8-3 0-4-1-3-2 3-4 0-9-5-9C7 9 2 13 0 17c0-3 0-5 1-7z" fill="url(#ed1)" /><path d="M10 14c-3 4-1 14 10 15-8 2-13-2-14-8 0-3 2-6 4-7z" fill="#0c59a4" /><path d="M15 13c-5 4 0 12 13 9-3 5-8 7-11 6-7-2-8-12-2-15z" fill="#124a8c" /><path d="M16 13c-2 6 3 10 12 8l2-3v-3c-2 4-12 7-12 3 1-2 1-4-2-5z" fill="#dcdbd9" /></svg></button>
        <button class="w-[55px] flex justify-center" aria-label="Microsoft Store"><svg class="w-[29px] h-[29px]" viewBox="0 0 29 29"><path d="M8 5V1.500Q8 .8 9 .8h11q1 0 1 .7V5" fill="none" stroke="#2fb9f0" stroke-width="1.700" /><path d="M0 4h29v21q0 4-4 4H4q-4 0-4-4z" fill="#164f8c" /><path d="M9 11h5v5H9z" fill="#f25022" /><path d="M15 11h5v5h-5z" fill="#7fba00" /><path d="M9 17h5v5H9z" fill="#00a4ef" /><path d="M15 17h5v5h-5z" fill="#ffb900" /></svg></button>
        <button class="w-[55px] flex justify-center" aria-label="Teams"><svg class="w-[30px] h-[27px]" viewBox="0 0 30 27"><circle cx="25" cy="5.500" r="3.200" fill="#5059c9" /><path d="M20 10h10v7c0 4-3 6-6 6h-4z" fill="#5059c9" /><circle cx="16" cy="4.500" r="4.500" fill="#7b83eb" /><path d="M9 10h13v9c0 5-3 8-7 8s-6-3-6-7z" fill="#7b83eb" /><rect y="5" width="15" height="16" rx="1.500" fill="#4b53bc" /><path d="M4 9.500h7M7.500 9.500v8" stroke="#fff" stroke-width="1.800" /></svg></button>
        <button class="relative w-[55px] h-full flex items-center justify-center" aria-label="Sticky Notes"><svg class="w-[27px] h-[27px]" viewBox="0 0 27 27"><rect width="27" height="27" rx="1.500" fill="#414141" /><path d="M14 26V14h13z" fill="#fc0" /></svg><span class="absolute bottom-1.5 w-2 h-1 rounded-full bg-[#7c7b79]"></span></button>
        <button class="relative w-[55px] h-full flex items-center justify-center" aria-label="Brave"><svg class="w-[26px] h-[30px]" viewBox="0 0 26 30"><path d="M8 0h10l3 3 3 0 1 4 1 3-4 13c-1 3-7 6-9 7-2-1-8-4-9-7L0 10l1-3 1-4h3z" fill="#fb4a1a" /><path d="M7 5l6 1 6-1 4 6-4 5 1 3-4 3-3 3-3-3-4-3 1-3-4-5z" fill="#fff" /><path d="M9 10l-3 1 4 3zM17 10l3 1-4 3zM13 9l1.500 7-1.500 1-1.500-1zM8 17l3 1-2 2zM18 17l-3 1 2 2zM11 21l2-1 2 1-2 1z" fill="#fb4a1a" /></svg><span class="absolute bottom-1.5 w-2 h-1 rounded-full bg-[#7c7b79]"></span></button>
        <button class="relative w-[55px] h-full flex items-center justify-center" aria-label="Notepad"><svg class="w-[22px] h-[30px]" viewBox="0 0 22 30"><path d="M0 3h22v21H0z" fill="#5cc3e6" /><path d="M0 25h22v2H0z" fill="#f4f4f4" /><path d="M0 27h22v2.500H0z" fill="#a8500c" /><path d="M4 9h14M4 14h14M4 19h14" stroke="#045b84" stroke-width="1.800" /><path d="M4 0v4M9 0v4M14 0v4M19 0v4" stroke="#045b84" stroke-width="2.600" /></svg><span class="absolute bottom-1.5 w-2 h-1 rounded-full bg-[#7c7b79]"></span></button>
        <button class="relative w-12 h-12 mx-[3px] rounded-md bg-[#efeeed] border border-[#d2d1cf] flex items-center justify-center" aria-label="Excel"><svg class="w-[30px] h-[28px]"><use href="#xl" /></svg><span class="absolute -bottom-px w-5 h-1 rounded-full bg-[#0078d4]"></span></button>
      </nav>
      <div class="flex items-center justify-end pr-6 pb-1 text-sm leading-5">
        <svg class="w-3.5 h-2 rotate-180"><use href="#chev" /></svg>
        <span class="ml-6 w-[34px] text-center">ENG<br />US</span>
        <svg class="ml-[21px] w-5 h-4" viewBox="0 0 20 16" fill="none" stroke="#1f1f1f" stroke-width="1.300"><path d="M.7 6c5-6 13.600-6 18.600 0M3.500 9c3.500-4.500 9.500-4.500 13 0M6.300 12c2-2.700 5.400-2.700 7.400 0" /><circle cx="10" cy="14" r="1.300" fill="#1f1f1f" /></svg>
        <svg class="ml-[9px] w-5 h-[17px]" viewBox="0 0 20 17" fill="none" stroke="#1f1f1f" stroke-width="1.300"><path d="M.7 5.500h3L8.500 1.500v14l-4.800-4h-3zM11 5.500c1.500 2 1.500 4 0 6" /><path d="M13.500 3.500c3 3 3 7 0 10M16 1.500c4 4 4 10 0 14" stroke="#a3a2a0" /></svg>
        <svg class="ml-2.5 w-[21px] h-[17px]" viewBox="0 0 21 17" fill="none" stroke="#1f1f1f" stroke-width="1.500"><path d="M8 3h9v12.500H2.500q-1.500 0-1.500-1.500V9M19.500 7v5" /><path d="M4 14V9l3-1 1-3h2v9z" fill="#1f1f1f" stroke="none" /><path d="M4.500 0L1 5h2.500L3 8l4-5H4.500z" fill="#1f1f1f" stroke="none" /></svg>
        <span class="ml-5 text-right">10:25 pm<br />6/5/2025</span>
      </div>
    </footer>
  </body>
</html>
